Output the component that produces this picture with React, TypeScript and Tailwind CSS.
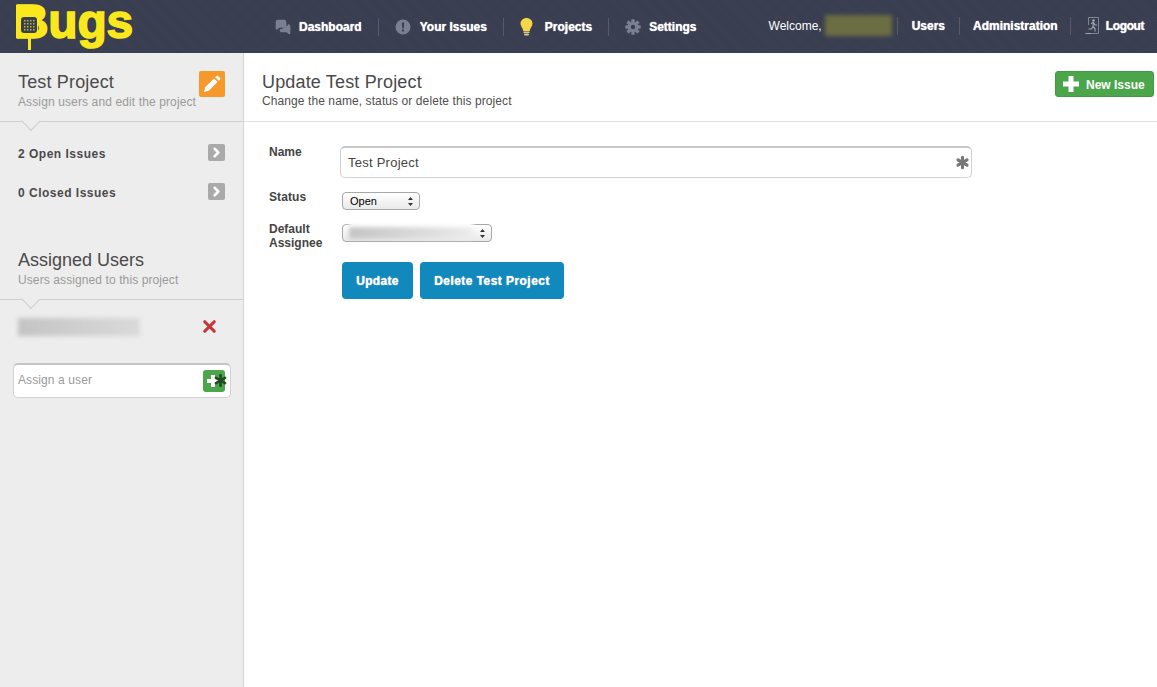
import { X, ChevronRight, MessagesSquare, Asterisk } from 'lucide-react';

function Notch() {
  return (
    <div className="absolute left-[24px] top-[-7px] h-[14px] w-[14px] rotate-45 border-b border-r border-[#cfcfcf] bg-[#ededed]" />
  );
}

function Sep() {
  return <div className="h-[18px] w-px bg-[#565b6c]" />;
}

function PlusMark({ size, bar }: { size: number; bar: number }) {
  const a = (size - bar) / 2;
  return (
    <svg width={size} height={size} viewBox={`0 0 ${size} ${size}`} fill="#fff">
      <rect x={a} y="0" width={bar} height={size} />
      <rect x="0" y={a} width={size} height={bar} />
    </svg>
  );
}

function NavLink({ icon, label, iconWidth, gap }: { icon: React.ReactNode; label: string; iconWidth: number; gap: string }) {
  return (
    <div className={`flex items-center ${gap}`}>
      <div className="flex justify-center" style={{ width: iconWidth }}>{icon}</div>
      <span className="text-[12px] font-bold text-white [text-shadow:0_0_1px_#fff]">{label}</span>
    </div>
  );
}

function Logo() {
  return (
    <div className="relative ml-[16px] h-[53px] w-[118px] self-start">
      <span className="absolute left-[-2px] top-0 text-[48px] leading-[43px] font-bold tracking-[-0.3px] text-[#fbe81c] [-webkit-text-stroke:1.5px_#fbe81c] [font-family:'Liberation_Sans',sans-serif]">Bugs</span>
      <svg className="absolute left-[0px] top-[4px]" width="24" height="46" viewBox="0 0 24 46">
        <rect x="0" y="1" width="22" height="33" fill="#fbe81c" />
        <rect x="5" y="13" width="16" height="16" rx="3" fill="#393e50" />
        <g fill="#fbe81c">
          {[8, 11, 14, 17].map((x) => [16, 19, 22, 25].map((y) => <rect key={`${x}-${y}`} x={x} y={y} width="1.500" height="1.500" opacity="0.7" />))}
        </g>
        <rect x="12" y="29" width="3" height="17" fill="#fbe81c" />
      </svg>
    </div>
  );
}

function Header() {
  return (
    <header className="flex h-[53px] items-center bg-[repeating-linear-gradient(45deg,#3b4053_0px,#3b4053_1px,#383d4f_1px,#383d4f_2px)]">
      <Logo />
      <nav className="ml-[141px] flex items-center gap-[16px]">
        <NavLink label="Dashboard" iconWidth={16} gap="gap-[8px]" icon={<MessagesSquare size={16} fill="#7b8090" stroke="#7b8090" />} />
        <Sep />
        <NavLink
          label="Your Issues"
          iconWidth={16}
          gap="gap-[9px]"
          icon={
            <svg width="16" height="16" viewBox="0 0 16 16">
              <circle cx="8" cy="8" r="7.500" fill="#7b8090" />
              <path d="M6.800 3.500h2.400l-.5 6H7.300z" fill="#393e50" />
              <rect x="7" y="10.500" width="2" height="2" fill="#393e50" />
            </svg>
          }
        />
        <Sep />
        <NavLink
          label="Projects"
          iconWidth={14}
          gap="gap-[11px]"
          icon={
            <svg width="13" height="18" viewBox="0 0 13 18">
              <path d="M6.500 0C3 0 .5 2.500 .5 5.500c0 3 2.500 4.500 2.800 7.500h6.400c.3-3 2.800-4.500 2.800-7.500C12.500 2.500 10 0 6.500 0z" fill="#f7d64a" />
              <rect x="3.500" y="13.500" width="6" height="1.500" fill="#d8c98a" />
              <rect x="4" y="15.500" width="5" height="2" rx="1" fill="#d8c98a" />
            </svg>
          }
        />
        <Sep />
        <NavLink
          label="Settings"
          iconWidth={16}
          gap="gap-[8px]"
          icon={
            <svg width="16" height="16" viewBox="0 0 16 16">
              <g fill="#7b8090">
                {[0, 45, 90, 135].map((a) => (
                  <rect key={a} x="6.300" y="0.300" width="3.400" height="15.400" rx="0.600" transform={`rotate(${a} 8 8)`} />
                ))}
              </g>
              <circle cx="8" cy="8" r="5.300" fill="#7b8090" />
              <circle cx="8" cy="8" r="2.200" fill="#393e50" />
            </svg>
          }
        />
      </nav>
      <div className="ml-[72px] flex -translate-y-px items-center text-[12px] text-white">
        <span>Welcome,</span>
        <div className="ml-[3px] h-[21px] w-[67px] bg-[#6b6d42] blur-[2px]" />
        <div className="ml-[5px]"><Sep /></div>
        <span className="ml-[14px] font-bold [text-shadow:0_0_1px_#fff]">Users</span>
        <div className="ml-[14px]"><Sep /></div>
        <span className="ml-[13px] font-bold [text-shadow:0_0_1px_#fff]">Administration</span>
        <div className="ml-[12px]"><Sep /></div>
        <svg className="ml-[14px]" width="14" height="19" viewBox="0 0 14 19" fill="none" stroke="#7f8393">
          <path d="M3.500 9V1.500h10v16H6" />
          <circle cx="8.500" cy="4.500" r="1.300" fill="#a4a7b2" stroke="none" />
          <path d="M6 7.500l2.500-1 1.500 2.500h2M8.500 6.500l-.5 4 2 2v3M8 10.500l-1.500 2.500H3.500M.5 17.500h5.500" stroke="#a4a7b2" strokeWidth="1.100" />
        </svg>
        <span className="ml-[7px] font-bold tracking-[-0.35px] [text-shadow:0_0_1px_#fff]">Logout</span>
      </div>
    </header>
  );
}

function IssueRow({ label }: { label: string }) {
  return (
    <div className="flex h-[18px] items-start justify-between pl-[18px] pr-[18px] text-[12px] font-bold tracking-[0.5px] text-[#4a4a4a]">
      <span className="pt-[1px]">{label}</span>
      <div className="flex h-[17px] w-[17px] items-center justify-center rounded-[2px] bg-[#a9a9a9]">
        <ChevronRight size={15} strokeWidth={4} className="text-white" />
      </div>
    </div>
  );
}

function Sidebar() {
  return (
    <aside className="w-[244px] shrink-0 border-r border-[#d4d4d4] bg-[#ededed]">
      <div className="relative flex h-[69px] items-start justify-between border-b border-[#cfcfcf] pl-[18px] pr-[18px] pt-[18px]">
        <div>
          <h2 className="text-[18px] leading-[22px] tracking-[0.16px] text-[#4a4a4a]">Test Project</h2>
          <p className="mt-[1px] text-[12px] leading-[16px] tracking-[0.12px] text-[#9a9a9a]">Assign users and edit the project</p>
        </div>
        <div className="flex h-[26px] w-[26px] items-center justify-center rounded-[2px] bg-[#f7982a]">
          <svg width="18" height="18" viewBox="0 0 18 18" fill="#fff">
            <path d="M1 17l1.200-4.800L11 3.400l3.600 3.600-8.800 8.800z" />
            <path d="M12.200 2.200l1.300-1.300a1 1 0 0 1 1.400 0l2.200 2.200a1 1 0 0 1 0 1.400l-1.300 1.300z" />
          </svg>
        </div>
        <div className="absolute bottom-0 left-0">
          <Notch />
        </div>
      </div>
      <div className="mt-[22px]"><IssueRow label="2 Open Issues" /></div>
      <div className="mt-[21px]"><IssueRow label="0 Closed Issues" /></div>
      <div className="relative mt-[45px] h-[54px] border-b border-[#cfcfcf] pl-[18px] pt-[3px]">
        <h2 className="text-[18px] leading-[22px] text-[#4a4a4a]">Assigned Users</h2>
        <p className="mt-[1px] text-[12px] leading-[16px] tracking-[0.1px] text-[#9a9a9a]">Users assigned to this project</p>
        <div className="absolute bottom-0 left-0">
          <Notch />
        </div>
      </div>
      <div className="mt-[19px] flex h-[16px] items-center justify-between pl-[18px] pr-[24px]">
        <div className="h-[18px] w-[122px] bg-gradient-to-r from-[#c4c4c4] to-[#dadada] blur-[2px]" />
        <X size={19} strokeWidth={4} className="-translate-y-px text-[#c8353a]" />
      </div>
      <div className="relative mx-[13px] mt-[28px] flex h-[35px] w-[218px] items-center justify-between rounded-[5px] border border-[#d2d2d2] border-t-2 border-t-[#c4c4c4] bg-white pl-[4px] pr-[5px]">
        <span className="-translate-y-px text-[12px] tracking-[0.1px] text-[#9a9a9a]">Assign a user</span>
        <div className="flex h-[22px] w-[22px] items-center justify-center rounded-[3px] bg-[#4ba54a] pr-[3px]">
          <PlusMark size={12} bar={4} />
        </div>
        <Asterisk size={21} strokeWidth={3} className="absolute right-[-1px] top-[5px] text-[#234a23]" />
      </div>
    </aside>
  );
}

function Updown() {
  return (
    <svg width="5" height="9" viewBox="0 0 5 9" fill="#333">
      <path d="M2.500 0L5 3H0zM2.500 9L0 6h5z" />
    </svg>
  );
}

function Form() {
  return (
    <div className="pl-[25px] pt-[24px] text-[12px]">
      <div className="flex h-[32px] items-start">
        <label className="w-[71px] -translate-y-px font-bold leading-[14px] text-[#444]">Name</label>
        <div className="relative flex h-[32px] w-[632px] items-center rounded-[5px] border border-[#d2d2d2] border-t-2 border-t-[#c8c8c8] pl-[7px] text-[13px] tracking-[0.25px] text-[#444]">
          Test Project
          <Asterisk size={21} strokeWidth={3.500} className="absolute right-[-2px] top-[4px] text-[#777]" />
        </div>
      </div>
      <div className="mt-[14px] flex h-[19px] items-start">
        <label className="w-[73px] -translate-y-[2px] font-bold leading-[14px] tracking-[0.1px] text-[#444]">Status</label>
        <div className="flex h-[18px] w-[78px] items-center justify-between rounded-[4px] border border-[#a8a8a8] bg-gradient-to-b from-white to-[#e9e9e9] pl-[7px] pr-[6px] text-[11px] text-black">
          Open
          <Updown />
        </div>
      </div>
      <div className="mt-[13px] flex h-[38px] items-start">
        <label className="w-[73px] -translate-y-[2px] font-bold leading-[14px] text-[#444]">Default<br />Assignee</label>
        <div className="relative flex h-[18px] w-[150px] items-center justify-between rounded-[4px] border border-[#a8a8a8] bg-gradient-to-b from-white to-[#e9e9e9] pl-[6px] pr-[6px]">
          <div className="absolute left-[6px] top-[-6px] h-[14px] w-[124px] bg-white blur-[2px]" />
          <div className="relative h-[12px] w-[124px] bg-gradient-to-r from-[#c4c4c4] to-[#ececec] blur-[2px]" />
          <Updown />
        </div>
      </div>
      <div className="ml-[73px] flex gap-[7px]">
        <button className="h-[37px] w-[71px] rounded-[4px] bg-[#1289bd] text-[12px] font-bold tracking-[0.3px] text-white [text-shadow:0_0_1px_#fff]">Update</button>
        <button className="h-[37px] w-[144px] rounded-[4px] bg-[#1289bd] text-[12px] font-bold tracking-[0.45px] text-white [text-shadow:0_0_1px_#fff]">Delete Test Project</button>
      </div>
    </div>
  );
}

function Main() {
  return (
    <main className="min-w-0 flex-1">
      <div className="flex h-[69px] items-start justify-between border-b border-[#e2e2e2] pl-[18px] pr-[3px] pt-[18px]">
        <div>
          <h1 className="text-[18px] leading-[22px] tracking-[0.16px] text-[#4a4a4a]">Update Test Project</h1>
          <p className="text-[12px] leading-[16px] tracking-[0.09px] text-[#4f4f4f]">Change the name, status or delete this project</p>
        </div>
        <button className="flex h-[26px] w-[99px] items-center rounded-[3px] border border-[#439a42] bg-[#4ba54a] pl-[7px] text-[12px] font-bold text-white">
          <PlusMark size={16} bar={5} />
          <span className="ml-[7px] translate-y-px">New Issue</span>
        </button>
      </div>
      <Form />
    </main>
  );
}

export default function App() {
  return (
    <div className="flex h-[687px] w-[1157px] flex-col overflow-hidden bg-white [font-family:'Liberation_Sans',Arial,sans-serif]">
      <Header />
      <div className="flex flex-1">
        <Sidebar />
        <Main />
      </div>
    </div>
  );
}
